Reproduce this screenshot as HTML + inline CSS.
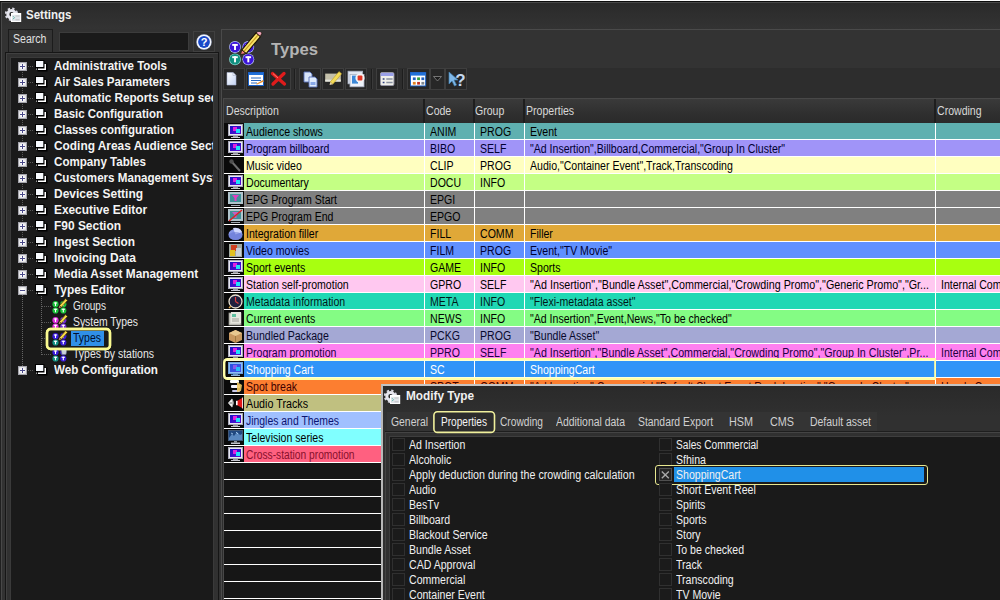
<!DOCTYPE html>
<html><head><meta charset="utf-8"><title>Settings</title>
<style>
html,body{margin:0;padding:0;background:#2c2c2c}
body{width:1000px;height:600px;overflow:hidden;position:relative;font-family:'Liberation Sans', sans-serif}
div,span{position:absolute;box-sizing:border-box}
span{white-space:pre;transform-origin:0 50%;display:block}
</style></head><body>

<svg width="0" height="0" style="position:absolute">
<defs>
<linearGradient id="scr" x1="0" y1="0" x2="1" y2="1"><stop offset="0" stop-color="#1a10c8"/><stop offset="1" stop-color="#5a10d0"/></linearGradient>
<g id="mon">
 <rect x="0" y="0" width="15" height="12" fill="#e8e8f0"/>
 <rect x="0.5" y="0.5" width="14" height="11" fill="none" stroke="#a8a8b8"/>
 <rect x="2" y="2" width="11" height="8" fill="url(#scr)"/>
 <rect x="5" y="3" width="4" height="4" fill="#e020e0"/>
 <rect x="8" y="5" width="4" height="4" fill="#20e0f8"/>
 <rect x="5" y="12" width="5" height="1" fill="#909098"/>
 <rect x="3" y="13" width="9" height="1" fill="#c8c8d0"/>
</g>
<g id="fold">
 <rect x="2.5" y="3.5" width="10" height="8" fill="#000"/>
 <rect x="3" y="4" width="8" height="6" fill="#fff"/>
 <rect x="0" y="0" width="9.5" height="8.5" fill="#000"/>
 <rect x="1" y="1" width="7.3" height="6" fill="#f8fbff"/>
 <rect x="1" y="8.6" width="1" height="1" fill="#ddd"/>
</g>
<g id="tt">
 <circle cx="3.5" cy="4" r="3.4" fill="#3010d8"/><rect x="1.8" y="2.3" width="3.6" height="1.2" fill="#fff"/><rect x="3" y="2.3" width="1.2" height="3.8" fill="#fff"/>
 <circle cx="3.5" cy="11.5" r="3.4" fill="#108878"/><rect x="1.8" y="9.8" width="3.6" height="1.2" fill="#fff"/><rect x="3" y="9.8" width="1.2" height="3.8" fill="#fff"/>
 <circle cx="11" cy="11.5" r="3.4" fill="#3010d8"/><rect x="9.3" y="9.8" width="3.6" height="1.2" fill="#fff"/><rect x="10.5" y="9.8" width="1.2" height="3.8" fill="#fff"/>
</g>
<g id="gear">
 <circle cx="6.5" cy="8.2" r="5.7" fill="none" stroke="#d8d8e2" stroke-width="2" stroke-dasharray="2.3 2.18"/>
 <circle cx="6.5" cy="8.2" r="3.7" fill="none" stroke="#e6e6ee" stroke-width="3"/>
 <rect x="6" y="7" width="10.2" height="9" fill="#fff"/>
 <rect x="7" y="8.8" width="8.2" height="6.2" fill="#e2e5ea"/>
 <path d="M8 10.2 l1.5 1.5 l-1.5 1.5" stroke="#50b0a0" fill="none" stroke-width=".9"/>
 <path d="M10.5 13.8h4M10.5 10h4" stroke="#b8b8b8" stroke-width=".8"/>
</g>
</defs></svg>

<div style="left:0px;top:0px;width:1000px;height:600px;background:#323232"></div><div style="left:2px;top:2px;width:998px;height:27px;background:linear-gradient(#2a2a2a,#333)"></div><div style="left:1px;top:2px;width:999px;height:1px;background:#484848"></div><div style="left:0px;top:0px;width:1000px;height:1px;background:#fafafa"></div><div style="left:0px;top:1px;width:1000px;height:1px;background:#0c0c0c"></div><div style="left:0px;top:2px;width:1px;height:598px;background:#202020"></div><div style="left:1px;top:2px;width:1px;height:598px;background:#484848"></div><svg style="position:absolute;left:5px;top:6px" width="17" height="17"><use href="#gear"/></svg><span style="left:26px;top:7px;height:16px;line-height:16px;font-size:12px;font-weight:700;color:#f0f0f0;transform:scaleX(0.960);">Settings</span><div style="left:8px;top:29px;width:45px;height:23px;background:#333;border:1px solid #1c1c1c;border-bottom:none;box-sizing:border-box"></div><span style="left:13px;top:31px;height:16px;line-height:16px;font-size:12px;font-weight:400;color:#e0e0e0;transform:scaleX(0.880);">Search</span><div style="left:59px;top:32px;width:130px;height:19px;background:#1a1a1a;border:1px solid #3c3c3c;box-sizing:border-box"></div><div style="left:193px;top:31px;width:22px;height:21px;background:#303030;border:1px solid #404040;box-sizing:border-box"></div><svg style="position:absolute;left:196px;top:34px" width="16" height="16"><circle cx="8" cy="8" r="7.7" fill="#c8d4f0"/><circle cx="8" cy="8" r="7" fill="#fff"/><circle cx="8" cy="8" r="5.9" fill="#1848c8"/><text x="8" y="12" font-family="Liberation Sans" font-weight="700" font-size="11" fill="#fff" text-anchor="middle">?</text></svg><div style="left:5px;top:52px;width:214px;height:548px;background:#313131;border:1px solid #161616;border-bottom:none;box-sizing:border-box;box-shadow:inset 1px 1px 0 #404040"></div><div style="left:10px;top:57px;width:204px;height:543px;background:#1a1a1a;border:1px solid #3a3a3a;border-bottom:none;box-sizing:border-box"></div><div style="left:11px;top:58px;width:202px;height:542px;overflow:hidden"><div style="left:-11px;top:-58px;width:1000px;height:600px"><div style="left:18px;top:62px;width:9px;height:9px;background:radial-gradient(#fff 30%,#d0d0d4);border:1px solid #a4a4ac;box-sizing:border-box"></div><div style="left:20px;top:66px;width:5px;height:1px;background:#484888"></div><div style="left:22px;top:64px;width:1px;height:5px;background:#484888"></div><div style="left:28px;top:66px;width:5px;height:1px;background:repeating-linear-gradient(90deg,#5a5a5a 0 1px,transparent 1px 2px)"></div><svg style="position:absolute;left:35px;top:60px" width="13" height="12"><use href="#fold"/></svg><span style="left:54px;top:58px;height:16px;line-height:16px;font-size:12px;font-weight:700;color:#f4f4f4;transform:scaleX(0.959);">Administrative Tools</span><div style="left:18px;top:78px;width:9px;height:9px;background:radial-gradient(#fff 30%,#d0d0d4);border:1px solid #a4a4ac;box-sizing:border-box"></div><div style="left:20px;top:82px;width:5px;height:1px;background:#484888"></div><div style="left:22px;top:80px;width:1px;height:5px;background:#484888"></div><div style="left:28px;top:82px;width:5px;height:1px;background:repeating-linear-gradient(90deg,#5a5a5a 0 1px,transparent 1px 2px)"></div><svg style="position:absolute;left:35px;top:76px" width="13" height="12"><use href="#fold"/></svg><span style="left:54px;top:74px;height:16px;line-height:16px;font-size:12px;font-weight:700;color:#f4f4f4;transform:scaleX(0.966);">Air Sales Parameters</span><div style="left:22px;top:72px;width:1px;height:5px;background:repeating-linear-gradient(180deg,#5a5a5a 0 1px,transparent 1px 2px)"></div><div style="left:18px;top:94px;width:9px;height:9px;background:radial-gradient(#fff 30%,#d0d0d4);border:1px solid #a4a4ac;box-sizing:border-box"></div><div style="left:20px;top:98px;width:5px;height:1px;background:#484888"></div><div style="left:22px;top:96px;width:1px;height:5px;background:#484888"></div><div style="left:28px;top:98px;width:5px;height:1px;background:repeating-linear-gradient(90deg,#5a5a5a 0 1px,transparent 1px 2px)"></div><svg style="position:absolute;left:35px;top:92px" width="13" height="12"><use href="#fold"/></svg><span style="left:54px;top:90px;height:16px;line-height:16px;font-size:12px;font-weight:700;color:#f4f4f4;transform:scaleX(0.975);">Automatic Reports Setup section</span><div style="left:22px;top:88px;width:1px;height:5px;background:repeating-linear-gradient(180deg,#5a5a5a 0 1px,transparent 1px 2px)"></div><div style="left:18px;top:110px;width:9px;height:9px;background:radial-gradient(#fff 30%,#d0d0d4);border:1px solid #a4a4ac;box-sizing:border-box"></div><div style="left:20px;top:114px;width:5px;height:1px;background:#484888"></div><div style="left:22px;top:112px;width:1px;height:5px;background:#484888"></div><div style="left:28px;top:114px;width:5px;height:1px;background:repeating-linear-gradient(90deg,#5a5a5a 0 1px,transparent 1px 2px)"></div><svg style="position:absolute;left:35px;top:108px" width="13" height="12"><use href="#fold"/></svg><span style="left:54px;top:106px;height:16px;line-height:16px;font-size:12px;font-weight:700;color:#f4f4f4;transform:scaleX(0.956);">Basic Configuration</span><div style="left:22px;top:104px;width:1px;height:5px;background:repeating-linear-gradient(180deg,#5a5a5a 0 1px,transparent 1px 2px)"></div><div style="left:18px;top:126px;width:9px;height:9px;background:radial-gradient(#fff 30%,#d0d0d4);border:1px solid #a4a4ac;box-sizing:border-box"></div><div style="left:20px;top:130px;width:5px;height:1px;background:#484888"></div><div style="left:22px;top:128px;width:1px;height:5px;background:#484888"></div><div style="left:28px;top:130px;width:5px;height:1px;background:repeating-linear-gradient(90deg,#5a5a5a 0 1px,transparent 1px 2px)"></div><svg style="position:absolute;left:35px;top:124px" width="13" height="12"><use href="#fold"/></svg><span style="left:54px;top:122px;height:16px;line-height:16px;font-size:12px;font-weight:700;color:#f4f4f4;transform:scaleX(0.957);">Classes configuration</span><div style="left:22px;top:120px;width:1px;height:5px;background:repeating-linear-gradient(180deg,#5a5a5a 0 1px,transparent 1px 2px)"></div><div style="left:18px;top:142px;width:9px;height:9px;background:radial-gradient(#fff 30%,#d0d0d4);border:1px solid #a4a4ac;box-sizing:border-box"></div><div style="left:20px;top:146px;width:5px;height:1px;background:#484888"></div><div style="left:22px;top:144px;width:1px;height:5px;background:#484888"></div><div style="left:28px;top:146px;width:5px;height:1px;background:repeating-linear-gradient(90deg,#5a5a5a 0 1px,transparent 1px 2px)"></div><svg style="position:absolute;left:35px;top:140px" width="13" height="12"><use href="#fold"/></svg><span style="left:54px;top:138px;height:16px;line-height:16px;font-size:12px;font-weight:700;color:#f4f4f4;transform:scaleX(0.990);">Coding Areas Audience Section</span><div style="left:22px;top:136px;width:1px;height:5px;background:repeating-linear-gradient(180deg,#5a5a5a 0 1px,transparent 1px 2px)"></div><div style="left:18px;top:158px;width:9px;height:9px;background:radial-gradient(#fff 30%,#d0d0d4);border:1px solid #a4a4ac;box-sizing:border-box"></div><div style="left:20px;top:162px;width:5px;height:1px;background:#484888"></div><div style="left:22px;top:160px;width:1px;height:5px;background:#484888"></div><div style="left:28px;top:162px;width:5px;height:1px;background:repeating-linear-gradient(90deg,#5a5a5a 0 1px,transparent 1px 2px)"></div><svg style="position:absolute;left:35px;top:156px" width="13" height="12"><use href="#fold"/></svg><span style="left:54px;top:154px;height:16px;line-height:16px;font-size:12px;font-weight:700;color:#f4f4f4;transform:scaleX(0.967);">Company Tables</span><div style="left:22px;top:152px;width:1px;height:5px;background:repeating-linear-gradient(180deg,#5a5a5a 0 1px,transparent 1px 2px)"></div><div style="left:18px;top:174px;width:9px;height:9px;background:radial-gradient(#fff 30%,#d0d0d4);border:1px solid #a4a4ac;box-sizing:border-box"></div><div style="left:20px;top:178px;width:5px;height:1px;background:#484888"></div><div style="left:22px;top:176px;width:1px;height:5px;background:#484888"></div><div style="left:28px;top:178px;width:5px;height:1px;background:repeating-linear-gradient(90deg,#5a5a5a 0 1px,transparent 1px 2px)"></div><svg style="position:absolute;left:35px;top:172px" width="13" height="12"><use href="#fold"/></svg><span style="left:54px;top:170px;height:16px;line-height:16px;font-size:12px;font-weight:700;color:#f4f4f4;transform:scaleX(0.966);">Customers Management System</span><div style="left:22px;top:168px;width:1px;height:5px;background:repeating-linear-gradient(180deg,#5a5a5a 0 1px,transparent 1px 2px)"></div><div style="left:18px;top:190px;width:9px;height:9px;background:radial-gradient(#fff 30%,#d0d0d4);border:1px solid #a4a4ac;box-sizing:border-box"></div><div style="left:20px;top:194px;width:5px;height:1px;background:#484888"></div><div style="left:22px;top:192px;width:1px;height:5px;background:#484888"></div><div style="left:28px;top:194px;width:5px;height:1px;background:repeating-linear-gradient(90deg,#5a5a5a 0 1px,transparent 1px 2px)"></div><svg style="position:absolute;left:35px;top:188px" width="13" height="12"><use href="#fold"/></svg><span style="left:54px;top:186px;height:16px;line-height:16px;font-size:12px;font-weight:700;color:#f4f4f4;transform:scaleX(0.996);">Devices Setting</span><div style="left:22px;top:184px;width:1px;height:5px;background:repeating-linear-gradient(180deg,#5a5a5a 0 1px,transparent 1px 2px)"></div><div style="left:18px;top:206px;width:9px;height:9px;background:radial-gradient(#fff 30%,#d0d0d4);border:1px solid #a4a4ac;box-sizing:border-box"></div><div style="left:20px;top:210px;width:5px;height:1px;background:#484888"></div><div style="left:22px;top:208px;width:1px;height:5px;background:#484888"></div><div style="left:28px;top:210px;width:5px;height:1px;background:repeating-linear-gradient(90deg,#5a5a5a 0 1px,transparent 1px 2px)"></div><svg style="position:absolute;left:35px;top:204px" width="13" height="12"><use href="#fold"/></svg><span style="left:54px;top:202px;height:16px;line-height:16px;font-size:12px;font-weight:700;color:#f4f4f4;transform:scaleX(0.989);">Executive Editor</span><div style="left:22px;top:200px;width:1px;height:5px;background:repeating-linear-gradient(180deg,#5a5a5a 0 1px,transparent 1px 2px)"></div><div style="left:18px;top:222px;width:9px;height:9px;background:radial-gradient(#fff 30%,#d0d0d4);border:1px solid #a4a4ac;box-sizing:border-box"></div><div style="left:20px;top:226px;width:5px;height:1px;background:#484888"></div><div style="left:22px;top:224px;width:1px;height:5px;background:#484888"></div><div style="left:28px;top:226px;width:5px;height:1px;background:repeating-linear-gradient(90deg,#5a5a5a 0 1px,transparent 1px 2px)"></div><svg style="position:absolute;left:35px;top:220px" width="13" height="12"><use href="#fold"/></svg><span style="left:54px;top:218px;height:16px;line-height:16px;font-size:12px;font-weight:700;color:#f4f4f4;transform:scaleX(0.995);">F90 Section</span><div style="left:22px;top:216px;width:1px;height:5px;background:repeating-linear-gradient(180deg,#5a5a5a 0 1px,transparent 1px 2px)"></div><div style="left:18px;top:238px;width:9px;height:9px;background:radial-gradient(#fff 30%,#d0d0d4);border:1px solid #a4a4ac;box-sizing:border-box"></div><div style="left:20px;top:242px;width:5px;height:1px;background:#484888"></div><div style="left:22px;top:240px;width:1px;height:5px;background:#484888"></div><div style="left:28px;top:242px;width:5px;height:1px;background:repeating-linear-gradient(90deg,#5a5a5a 0 1px,transparent 1px 2px)"></div><svg style="position:absolute;left:35px;top:236px" width="13" height="12"><use href="#fold"/></svg><span style="left:54px;top:234px;height:16px;line-height:16px;font-size:12px;font-weight:700;color:#f4f4f4;transform:scaleX(0.988);">Ingest Section</span><div style="left:22px;top:232px;width:1px;height:5px;background:repeating-linear-gradient(180deg,#5a5a5a 0 1px,transparent 1px 2px)"></div><div style="left:18px;top:254px;width:9px;height:9px;background:radial-gradient(#fff 30%,#d0d0d4);border:1px solid #a4a4ac;box-sizing:border-box"></div><div style="left:20px;top:258px;width:5px;height:1px;background:#484888"></div><div style="left:22px;top:256px;width:1px;height:5px;background:#484888"></div><div style="left:28px;top:258px;width:5px;height:1px;background:repeating-linear-gradient(90deg,#5a5a5a 0 1px,transparent 1px 2px)"></div><svg style="position:absolute;left:35px;top:252px" width="13" height="12"><use href="#fold"/></svg><span style="left:54px;top:250px;height:16px;line-height:16px;font-size:12px;font-weight:700;color:#f4f4f4;transform:scaleX(1.000);">Invoicing Data</span><div style="left:22px;top:248px;width:1px;height:5px;background:repeating-linear-gradient(180deg,#5a5a5a 0 1px,transparent 1px 2px)"></div><div style="left:18px;top:270px;width:9px;height:9px;background:radial-gradient(#fff 30%,#d0d0d4);border:1px solid #a4a4ac;box-sizing:border-box"></div><div style="left:20px;top:274px;width:5px;height:1px;background:#484888"></div><div style="left:22px;top:272px;width:1px;height:5px;background:#484888"></div><div style="left:28px;top:274px;width:5px;height:1px;background:repeating-linear-gradient(90deg,#5a5a5a 0 1px,transparent 1px 2px)"></div><svg style="position:absolute;left:35px;top:268px" width="13" height="12"><use href="#fold"/></svg><span style="left:54px;top:266px;height:16px;line-height:16px;font-size:12px;font-weight:700;color:#f4f4f4;transform:scaleX(0.985);">Media Asset Management</span><div style="left:22px;top:264px;width:1px;height:5px;background:repeating-linear-gradient(180deg,#5a5a5a 0 1px,transparent 1px 2px)"></div><div style="left:18px;top:286px;width:9px;height:9px;background:radial-gradient(#fff 30%,#d0d0d4);border:1px solid #a4a4ac;box-sizing:border-box"></div><div style="left:20px;top:290px;width:5px;height:1px;background:#484888"></div><div style="left:28px;top:290px;width:5px;height:1px;background:repeating-linear-gradient(90deg,#5a5a5a 0 1px,transparent 1px 2px)"></div><svg style="position:absolute;left:35px;top:284px" width="13" height="12"><use href="#fold"/></svg><span style="left:54px;top:282px;height:16px;line-height:16px;font-size:12px;font-weight:700;color:#f4f4f4;transform:scaleX(0.989);">Types Editor</span><div style="left:22px;top:280px;width:1px;height:5px;background:repeating-linear-gradient(180deg,#5a5a5a 0 1px,transparent 1px 2px)"></div><div style="left:18px;top:366px;width:9px;height:9px;background:radial-gradient(#fff 30%,#d0d0d4);border:1px solid #a4a4ac;box-sizing:border-box"></div><div style="left:20px;top:370px;width:5px;height:1px;background:#484888"></div><div style="left:22px;top:368px;width:1px;height:5px;background:#484888"></div><div style="left:28px;top:370px;width:5px;height:1px;background:repeating-linear-gradient(90deg,#5a5a5a 0 1px,transparent 1px 2px)"></div><svg style="position:absolute;left:35px;top:364px" width="13" height="12"><use href="#fold"/></svg><span style="left:54px;top:362px;height:16px;line-height:16px;font-size:12px;font-weight:700;color:#f4f4f4;transform:scaleX(0.971);">Web Configuration</span><div style="left:22px;top:295px;width:1px;height:71px;background:repeating-linear-gradient(0deg,#666 0 1px,transparent 1px 2px)"></div><div style="left:41px;top:296px;width:1px;height:59px;background:repeating-linear-gradient(0deg,#666 0 1px,transparent 1px 2px)"></div><div style="left:42px;top:306px;width:9px;height:1px;background:repeating-linear-gradient(90deg,#5a5a5a 0 1px,transparent 1px 2px)"></div><svg style="position:absolute;left:52px;top:298px" width="16" height="16"><circle cx="3.5" cy="6.2" r="3.1" fill="#18c038"/><rect x="1.87" y="4.42" width="3.26" height="1.12" fill="#fff"/><rect x="2.94" y="4.42" width="1.12" height="3.56" fill="#fff"/><circle cx="11.3" cy="6.2" r="3.1" fill="#18c038"/><rect x="9.67" y="4.42" width="3.26" height="1.12" fill="#fff"/><rect x="10.74" y="4.42" width="1.12" height="3.56" fill="#fff"/><circle cx="3.5" cy="12.5" r="3.1" fill="#18c038"/><rect x="1.87" y="10.72" width="3.26" height="1.12" fill="#fff"/><rect x="2.94" y="10.72" width="1.12" height="3.56" fill="#fff"/><circle cx="11.3" cy="12.5" r="3.1" fill="#18c038"/><rect x="9.67" y="10.72" width="3.26" height="1.12" fill="#fff"/><rect x="10.74" y="10.72" width="1.12" height="3.56" fill="#fff"/><path d="M7.4 7.6 L13.6 0.6 L15.6 2.4 L9.4 9.4 Z" fill="#f4d848" stroke="#302000" stroke-width=".7"/><path d="M7.4 7.6 L6.6 10.2 L9.4 9.4Z" fill="#f0b0a0" stroke="#302000" stroke-width=".4"/></svg><span style="left:73px;top:298px;height:16px;line-height:16px;font-size:12px;font-weight:400;color:#e8e8e8;transform:scaleX(0.838);">Groups</span><div style="left:42px;top:322px;width:9px;height:1px;background:repeating-linear-gradient(90deg,#5a5a5a 0 1px,transparent 1px 2px)"></div><svg style="position:absolute;left:52px;top:314px" width="16" height="16"><circle cx="3.5" cy="6.2" r="3.1" fill="#d828d8"/><rect x="1.87" y="4.42" width="3.26" height="1.12" fill="#fff"/><rect x="2.94" y="4.42" width="1.12" height="3.56" fill="#fff"/><circle cx="11.3" cy="6.2" r="3.1" fill="#7028d0"/><rect x="9.67" y="4.42" width="3.26" height="1.12" fill="#fff"/><rect x="10.74" y="4.42" width="1.12" height="3.56" fill="#fff"/><circle cx="3.5" cy="12.5" r="3.1" fill="#d828d8"/><rect x="1.87" y="10.72" width="3.26" height="1.12" fill="#fff"/><rect x="2.94" y="10.72" width="1.12" height="3.56" fill="#fff"/><circle cx="11.3" cy="12.5" r="3.1" fill="#7028d0"/><rect x="9.67" y="10.72" width="3.26" height="1.12" fill="#fff"/><rect x="10.74" y="10.72" width="1.12" height="3.56" fill="#fff"/><path d="M7.4 7.6 L13.6 0.6 L15.6 2.4 L9.4 9.4 Z" fill="#f4d848" stroke="#302000" stroke-width=".7"/><path d="M7.4 7.6 L6.6 10.2 L9.4 9.4Z" fill="#f0b0a0" stroke="#302000" stroke-width=".4"/></svg><span style="left:73px;top:314px;height:16px;line-height:16px;font-size:12px;font-weight:400;color:#e8e8e8;transform:scaleX(0.865);">System Types</span><svg style="position:absolute;left:44px;top:326px" width="70" height="26"><rect x="3" y="3" width="63" height="20" rx="3.5" fill="#1a1a1a" stroke="#fafa90" stroke-width="2.4"/></svg><div style="left:42px;top:338px;width:3px;height:1px;background:repeating-linear-gradient(90deg,#5a5a5a 0 1px,transparent 1px 2px)"></div><svg style="position:absolute;left:52px;top:330px" width="16" height="16"><circle cx="3.5" cy="6.2" r="3.1" fill="#3818d8"/><rect x="1.87" y="4.42" width="3.26" height="1.12" fill="#fff"/><rect x="2.94" y="4.42" width="1.12" height="3.56" fill="#fff"/><circle cx="11.3" cy="6.2" r="3.1" fill="#3818d8"/><rect x="9.67" y="4.42" width="3.26" height="1.12" fill="#fff"/><rect x="10.74" y="4.42" width="1.12" height="3.56" fill="#fff"/><circle cx="3.5" cy="12.5" r="3.1" fill="#109080"/><rect x="1.87" y="10.72" width="3.26" height="1.12" fill="#fff"/><rect x="2.94" y="10.72" width="1.12" height="3.56" fill="#fff"/><circle cx="11.3" cy="12.5" r="3.1" fill="#3818d8"/><rect x="9.67" y="10.72" width="3.26" height="1.12" fill="#fff"/><rect x="10.74" y="10.72" width="1.12" height="3.56" fill="#fff"/><path d="M7.4 7.6 L13.6 0.6 L15.6 2.4 L9.4 9.4 Z" fill="#f4d848" stroke="#302000" stroke-width=".7"/><path d="M7.4 7.6 L6.6 10.2 L9.4 9.4Z" fill="#f0b0a0" stroke="#302000" stroke-width=".4"/></svg><div style="left:71px;top:331px;width:33px;height:15px;background:#3090e8"></div><span style="left:73px;top:330px;height:16px;line-height:16px;font-size:12px;font-weight:400;color:#001030;transform:scaleX(0.875);">Types</span><div style="left:42px;top:354px;width:9px;height:1px;background:repeating-linear-gradient(90deg,#5a5a5a 0 1px,transparent 1px 2px)"></div><svg style="position:absolute;left:52px;top:346px" width="16" height="16"><circle cx="3.5" cy="6.2" r="3.1" fill="#3818d8"/><rect x="1.87" y="4.42" width="3.26" height="1.12" fill="#fff"/><rect x="2.94" y="4.42" width="1.12" height="3.56" fill="#fff"/><circle cx="11.3" cy="6.2" r="3.1" fill="#3818d8"/><rect x="9.67" y="4.42" width="3.26" height="1.12" fill="#fff"/><rect x="10.74" y="4.42" width="1.12" height="3.56" fill="#fff"/><circle cx="3.5" cy="12.5" r="3.1" fill="#109080"/><rect x="1.87" y="10.72" width="3.26" height="1.12" fill="#fff"/><rect x="2.94" y="10.72" width="1.12" height="3.56" fill="#fff"/><circle cx="11.3" cy="12.5" r="3.1" fill="#3818d8"/><rect x="9.67" y="10.72" width="3.26" height="1.12" fill="#fff"/><rect x="10.74" y="10.72" width="1.12" height="3.56" fill="#fff"/><path d="M9 3h6l-1 5.5h-4z" fill="#c8d0d8" stroke="#687078" stroke-width=".6"/><ellipse cx="12" cy="3.3" rx="3" ry="1" fill="#f0f4f8"/></svg><span style="left:73px;top:346px;height:16px;line-height:16px;font-size:12px;font-weight:400;color:#e8e8e8;transform:scaleX(0.874);">Types by stations</span><svg style="position:absolute;left:44px;top:326px" width="70" height="26"><rect x="3" y="3" width="63" height="20" rx="3.5" fill="none" stroke="#fafa90" stroke-width="2.4"/></svg></div></div><div style="left:221px;top:29px;width:780px;height:572px;border:1px solid #4a4a4a;border-right:none;border-bottom:none;box-sizing:border-box;background:#2d2d2d"></div><div style="left:222px;top:30px;width:778px;height:38px;background:#333"></div><svg style="position:absolute;left:226px;top:32px" width="38" height="34"><circle cx="9" cy="15" r="5.8999999999999995" fill="#b8c8ff"/><circle cx="9" cy="15" r="5.3" fill="#3c14d8"/><rect x="6.22" y="11.95" width="5.57" height="1.91" fill="#fff"/><rect x="8.05" y="11.95" width="1.91" height="6.09" fill="#fff"/><circle cx="22.3" cy="15" r="5.8999999999999995" fill="#b8c8ff"/><circle cx="22.3" cy="15" r="5.3" fill="#3c14d8"/><rect x="19.52" y="11.95" width="5.57" height="1.91" fill="#fff"/><rect x="21.35" y="11.95" width="1.91" height="6.09" fill="#fff"/><circle cx="9" cy="27.3" r="5.8999999999999995" fill="#90d8d0"/><circle cx="9" cy="27.3" r="5.3" fill="#109080"/><rect x="6.22" y="24.25" width="5.57" height="1.91" fill="#fff"/><rect x="8.05" y="24.25" width="1.91" height="6.09" fill="#fff"/><circle cx="22.3" cy="27.3" r="5.8999999999999995" fill="#b8c8ff"/><circle cx="22.3" cy="27.3" r="5.3" fill="#3c14d8"/><rect x="19.52" y="24.25" width="5.57" height="1.91" fill="#fff"/><rect x="21.35" y="24.25" width="1.91" height="6.09" fill="#fff"/><g transform="translate(-1.2,-2)"><path d="M17 20 L31.3 2.8 L35.7 6.6 L21.4 23.6 Z" fill="#f8e468" stroke="#181000" stroke-width="1.1"/><path d="M19 21.7 L33.5 4.7" stroke="#c89820" stroke-width="1.2"/><path d="M31.5 3 l1.6-1.8 q2.6-.6 4 2 l-1.6 3.2z" fill="#f4a8c0" stroke="#181000" stroke-width=".8"/><path d="M17 20 L15.8 24.6 L21 23.4Z" fill="#f08080" stroke="#181000" stroke-width=".7"/></g></svg><span style="left:271px;top:42px;height:16px;line-height:16px;font-size:16px;font-weight:700;color:#b4b4b4;transform:scaleX(1.043);">Types</span><div style="left:223px;top:68px;width:22px;height:22px;border:1px solid #3e3e3e;box-sizing:border-box;background:#272727"></div><div style="left:246px;top:68px;width:22px;height:22px;border:1px solid #3e3e3e;box-sizing:border-box;background:#272727"></div><div style="left:269px;top:68px;width:22px;height:22px;border:1px solid #3e3e3e;box-sizing:border-box;background:#272727"></div><div style="left:299px;top:68px;width:22px;height:22px;border:1px solid #3e3e3e;box-sizing:border-box;background:#272727"></div><div style="left:322px;top:68px;width:22px;height:22px;border:1px solid #3e3e3e;box-sizing:border-box;background:#272727"></div><div style="left:345px;top:68px;width:22px;height:22px;border:1px solid #3e3e3e;box-sizing:border-box;background:#272727"></div><div style="left:376px;top:68px;width:22px;height:22px;border:1px solid #3e3e3e;box-sizing:border-box;background:#272727"></div><div style="left:407px;top:68px;width:23px;height:22px;border:1px solid #3e3e3e;box-sizing:border-box;background:#272727"></div><div style="left:430px;top:68px;width:15px;height:22px;border:1px solid #3e3e3e;box-sizing:border-box;background:#272727"></div><div style="left:445px;top:68px;width:22px;height:22px;border:1px solid #3e3e3e;box-sizing:border-box;background:#272727"></div><div style="left:294px;top:69px;width:1px;height:20px;background:#1e1e1e"></div><div style="left:295px;top:69px;width:1px;height:20px;background:#3a3a3a"></div><div style="left:371px;top:69px;width:1px;height:20px;background:#1e1e1e"></div><div style="left:372px;top:69px;width:1px;height:20px;background:#3a3a3a"></div><div style="left:402px;top:69px;width:1px;height:20px;background:#1e1e1e"></div><div style="left:403px;top:69px;width:1px;height:20px;background:#3a3a3a"></div><svg style="position:absolute;left:226px;top:72px" width="12" height="14"><defs><linearGradient id="dg" x1="0" y1="0" x2="1" y2="1"><stop offset="0" stop-color="#fff"/><stop offset="1" stop-color="#c4d4f4"/></linearGradient></defs><path d="M1 .5h6l3 3v9.5H1z" fill="url(#dg)" stroke="#a8b4d0" stroke-width=".6"/><path d="M7 .5v3h3z" fill="#f8faff" stroke="#98a4c0" stroke-width=".5"/></svg><svg style="position:absolute;left:248px;top:71px" width="18" height="16"><rect x="0" y="1" width="16" height="14" fill="#fff"/><rect x="0" y="1" width="16" height="3" fill="#2070d8"/><rect x="0.5" y="1.5" width="15" height="13" fill="none" stroke="#1860c8"/><path d="M3 7h10M3 9.5h10M3 12h6" stroke="#2868c0" stroke-width="1"/><path d="M8 13l7-4 1 1.5-7 3z" fill="#e89030"/></svg><svg style="position:absolute;left:270px;top:71px" width="18" height="16"><path d="M2.5 2.5 L14.5 13 M14 2.5 L3 13" stroke="#e01c1c" stroke-width="3.3" stroke-linecap="round"/><path d="M3 2.6 L8 7" stroke="#ff8070" stroke-width="1"/></svg><svg style="position:absolute;left:303px;top:71px" width="16" height="17"><path d="M1 1h6l2 2v8H1z" fill="#d8e4f8" stroke="#5870b8" stroke-width=".9"/><path d="M6 6h6l2 2v8H6z" fill="#e0ecfc" stroke="#5870b8" stroke-width=".9"/><rect x="7.5" y="11" width="5" height="3" fill="#88a8e8"/></svg><svg style="position:absolute;left:324px;top:70px" width="20" height="16"><rect x="1.2" y="3.6" width="15.6" height="8" fill="#c4c0aa"/><rect x="1.2" y="9.6" width="15.6" height="2" fill="#e4e4dc"/><path d="M6.2 12 L15 1.6 L17.6 3.8 L8.8 14.2 Z" fill="#f4dc58" stroke="#b89828" stroke-width=".6"/><path d="M6.2 12 L5.6 15 L8.8 14.2Z" fill="#ecd8a8"/></svg><svg style="position:absolute;left:347px;top:70px" width="19" height="18"><rect x="1" y="1.2" width="14.6" height="12.6" fill="#dfe6f2" stroke="#a8b0c0" stroke-width=".8"/><rect x="3" y="4.4" width="14" height="12.4" fill="#eef2fa" stroke="#a8b0c0" stroke-width=".8"/><rect x="5" y="5.6" width="6" height="8" fill="#3c88d8"/><circle cx="13" cy="8" r="4.6" fill="#f4f4f4"/><rect x="10.6" y="5.6" width="4.8" height="4.8" rx="1" fill="#e03424"/></svg><svg style="position:absolute;left:380px;top:71px" width="17" height="16"><g transform="scale(.9,1)"><rect x=".5" y="1.5" width="15" height="13" rx="1.5" fill="#f0f0ea" stroke="#9898a8"/><rect x="1" y="2" width="14" height="3" fill="#9aa0e8"/><path d="M3 8h2M3 11.5h2" stroke="#304080" stroke-width="1.6"/><path d="M7 8h7M7 11.5h7" stroke="#8890a0" stroke-width="1.6"/></g></svg><svg style="position:absolute;left:410px;top:72px" width="17" height="16"><g transform="scale(.95,.9)"><rect x=".5" y=".5" width="16" height="15" fill="#fff" stroke="#1860c8"/><rect x="1" y="1" width="15" height="3" fill="#2070d8"/><rect x="3" y="6" width="3" height="3" fill="#2060c0"/><rect x="7.5" y="6" width="3" height="3" fill="#30a040"/><rect x="12" y="6" width="3" height="3" fill="#2060c0"/><rect x="3" y="11" width="3" height="3" fill="#e08020"/><rect x="7.5" y="11" width="3" height="3" fill="#c03020"/><rect x="12" y="11" width="3" height="3" fill="#808890"/></g></svg><svg style="position:absolute;left:433px;top:76px" width="9" height="6"><path d="M0.5 0.5h8l-4 4.5z" fill="#1c1c1c" stroke="#8a8a8a" stroke-width=".8"/></svg><svg style="position:absolute;left:448px;top:71px" width="18" height="17"><path d="M1 1v12l3-3 2.5 5 2-1-2.5-5h4z" fill="#80b8e8" stroke="#4080b0" stroke-width=".7"/><text x="12.5" y="14.5" font-family="Liberation Sans" font-weight="700" font-size="17" fill="#c4d8f0" text-anchor="middle">?</text></svg><div style="left:223px;top:98px;width:778px;height:503px;border:1px solid #484848;border-right:none;border-bottom:none;box-sizing:border-box;background:#2a2a2a"></div><div style="left:224px;top:99px;width:777px;height:501px;background:#161616"></div><div style="left:224px;top:123px;width:20px;height:340px;background:#0a0a0a"></div><div style="left:224px;top:99px;width:777px;height:24px;background:linear-gradient(#3a3a3a,#303030 55%,#2a2a2a)"></div><div style="left:423px;top:99px;width:2px;height:24px;background:#1e1e1e"></div><div style="left:473px;top:99px;width:2px;height:24px;background:#1e1e1e"></div><div style="left:523px;top:99px;width:2px;height:24px;background:#1e1e1e"></div><div style="left:934px;top:99px;width:2px;height:24px;background:#1e1e1e"></div><span style="left:226px;top:103px;height:16px;line-height:16px;font-size:12px;font-weight:400;color:#d8d8d8;transform:scaleX(0.880);">Description</span><span style="left:426px;top:103px;height:16px;line-height:16px;font-size:12px;font-weight:400;color:#d8d8d8;transform:scaleX(0.880);">Code</span><span style="left:475px;top:103px;height:16px;line-height:16px;font-size:12px;font-weight:400;color:#d8d8d8;transform:scaleX(0.880);">Group</span><span style="left:526px;top:103px;height:16px;line-height:16px;font-size:12px;font-weight:400;color:#d8d8d8;transform:scaleX(0.880);">Properties</span><span style="left:937px;top:103px;height:16px;line-height:16px;font-size:12px;font-weight:400;color:#d8d8d8;transform:scaleX(0.880);">Crowding</span><div style="left:244px;top:123px;width:756px;height:16px;background:#5fb0b0"></div><div style="left:224px;top:139px;width:776px;height:1px;background:#fff"></div><div style="left:424px;top:123px;width:1px;height:17px;background:#fff"></div><div style="left:474px;top:123px;width:1px;height:17px;background:#fff"></div><div style="left:524px;top:123px;width:1px;height:17px;background:#fff"></div><div style="left:935px;top:123px;width:1px;height:17px;background:#fff"></div><svg style="position:absolute;left:228px;top:124px" width="15" height="14"><use href="#mon"/></svg><span style="left:246px;top:124px;height:16px;line-height:16px;font-size:12px;font-weight:400;color:#000;transform:scaleX(0.880);">Audience shows</span><span style="left:430px;top:124px;height:16px;line-height:16px;font-size:12px;font-weight:400;color:#000;transform:scaleX(0.880);">ANIM</span><span style="left:480px;top:124px;height:16px;line-height:16px;font-size:12px;font-weight:400;color:#000;transform:scaleX(0.880);">PROG</span><span style="left:530px;top:124px;height:16px;line-height:16px;font-size:12px;font-weight:400;color:#000;transform:scaleX(0.880);">Event</span><div style="left:244px;top:140px;width:756px;height:16px;background:#a094f8"></div><div style="left:224px;top:156px;width:776px;height:1px;background:#fff"></div><div style="left:424px;top:140px;width:1px;height:17px;background:#fff"></div><div style="left:474px;top:140px;width:1px;height:17px;background:#fff"></div><div style="left:524px;top:140px;width:1px;height:17px;background:#fff"></div><div style="left:935px;top:140px;width:1px;height:17px;background:#fff"></div><svg style="position:absolute;left:228px;top:141px" width="15" height="14"><use href="#mon"/></svg><span style="left:246px;top:141px;height:16px;line-height:16px;font-size:12px;font-weight:400;color:#000030;transform:scaleX(0.880);">Program billboard</span><span style="left:430px;top:141px;height:16px;line-height:16px;font-size:12px;font-weight:400;color:#000030;transform:scaleX(0.880);">BIBO</span><span style="left:480px;top:141px;height:16px;line-height:16px;font-size:12px;font-weight:400;color:#000030;transform:scaleX(0.880);">SELF</span><span style="left:530px;top:141px;height:16px;line-height:16px;font-size:12px;font-weight:400;color:#000030;transform:scaleX(0.880);">&quot;Ad Insertion&quot;,Billboard,Commercial,&quot;Group In Cluster&quot;</span><div style="left:244px;top:157px;width:756px;height:16px;background:#ffffc0"></div><div style="left:224px;top:173px;width:776px;height:1px;background:#fff"></div><div style="left:424px;top:157px;width:1px;height:17px;background:#fff"></div><div style="left:474px;top:157px;width:1px;height:17px;background:#fff"></div><div style="left:524px;top:157px;width:1px;height:17px;background:#fff"></div><div style="left:935px;top:157px;width:1px;height:17px;background:#fff"></div><svg style="position:absolute;left:228px;top:158px" width="15" height="15"><path d="M3 3 L12 13" stroke="#707070" stroke-width="2"/><circle cx="3.5" cy="3.5" r="2.2" fill="#505050"/></svg><span style="left:246px;top:158px;height:16px;line-height:16px;font-size:12px;font-weight:400;color:#000;transform:scaleX(0.880);">Music video</span><span style="left:430px;top:158px;height:16px;line-height:16px;font-size:12px;font-weight:400;color:#000;transform:scaleX(0.880);">CLIP</span><span style="left:480px;top:158px;height:16px;line-height:16px;font-size:12px;font-weight:400;color:#000;transform:scaleX(0.880);">PROG</span><span style="left:530px;top:158px;height:16px;line-height:16px;font-size:12px;font-weight:400;color:#000;transform:scaleX(0.880);">Audio,&quot;Container Event&quot;,Track,Transcoding</span><div style="left:244px;top:174px;width:756px;height:16px;background:#c4ff84"></div><div style="left:224px;top:190px;width:776px;height:1px;background:#fff"></div><div style="left:424px;top:174px;width:1px;height:17px;background:#fff"></div><div style="left:474px;top:174px;width:1px;height:17px;background:#fff"></div><div style="left:524px;top:174px;width:1px;height:17px;background:#fff"></div><div style="left:935px;top:174px;width:1px;height:17px;background:#fff"></div><svg style="position:absolute;left:228px;top:175px" width="15" height="14"><use href="#mon"/></svg><span style="left:246px;top:175px;height:16px;line-height:16px;font-size:12px;font-weight:400;color:#000;transform:scaleX(0.880);">Documentary</span><span style="left:430px;top:175px;height:16px;line-height:16px;font-size:12px;font-weight:400;color:#000;transform:scaleX(0.880);">DOCU</span><span style="left:480px;top:175px;height:16px;line-height:16px;font-size:12px;font-weight:400;color:#000;transform:scaleX(0.880);">INFO</span><div style="left:244px;top:191px;width:756px;height:16px;background:#808080"></div><div style="left:224px;top:207px;width:776px;height:1px;background:#fff"></div><div style="left:424px;top:191px;width:1px;height:17px;background:#fff"></div><div style="left:474px;top:191px;width:1px;height:17px;background:#fff"></div><div style="left:524px;top:191px;width:1px;height:17px;background:#fff"></div><div style="left:935px;top:191px;width:1px;height:17px;background:#fff"></div><svg style="position:absolute;left:228px;top:192px" width="15" height="15"><rect x="0" y="0" width="15" height="12" fill="#b0c4cc"/><rect x="2" y="2" width="11" height="8" fill="#409098"/><path d="M4 3h7l-2.5 3v3h-2v-3z" fill="#e040c0"/><rect x="3" y="13" width="9" height="1" fill="#a0a8b0"/></svg><span style="left:246px;top:192px;height:16px;line-height:16px;font-size:12px;font-weight:400;color:#000;transform:scaleX(0.880);">EPG Program Start</span><span style="left:430px;top:192px;height:16px;line-height:16px;font-size:12px;font-weight:400;color:#000;transform:scaleX(0.880);">EPGI</span><div style="left:244px;top:208px;width:756px;height:16px;background:#808080"></div><div style="left:224px;top:224px;width:776px;height:1px;background:#fff"></div><div style="left:424px;top:208px;width:1px;height:17px;background:#fff"></div><div style="left:474px;top:208px;width:1px;height:17px;background:#fff"></div><div style="left:524px;top:208px;width:1px;height:17px;background:#fff"></div><div style="left:935px;top:208px;width:1px;height:17px;background:#fff"></div><svg style="position:absolute;left:228px;top:209px" width="15" height="15"><rect x="0" y="0" width="15" height="12" fill="#b0c4cc"/><rect x="2" y="2" width="11" height="8" fill="#409098"/><path d="M4 3h7l-2.5 3v3h-2v-3z" fill="#c060c0"/><path d="M1 12 L14 1" stroke="#e02020" stroke-width="1.4"/><rect x="3" y="13" width="9" height="1" fill="#a0a8b0"/></svg><span style="left:246px;top:209px;height:16px;line-height:16px;font-size:12px;font-weight:400;color:#000;transform:scaleX(0.880);">EPG Program End</span><span style="left:430px;top:209px;height:16px;line-height:16px;font-size:12px;font-weight:400;color:#000;transform:scaleX(0.880);">EPGO</span><div style="left:244px;top:225px;width:756px;height:16px;background:#e0a838"></div><div style="left:224px;top:241px;width:776px;height:1px;background:#fff"></div><div style="left:424px;top:225px;width:1px;height:17px;background:#fff"></div><div style="left:474px;top:225px;width:1px;height:17px;background:#fff"></div><div style="left:524px;top:225px;width:1px;height:17px;background:#fff"></div><div style="left:935px;top:225px;width:1px;height:17px;background:#fff"></div><svg style="position:absolute;left:228px;top:226px" width="15" height="15"><ellipse cx="7.5" cy="8.5" rx="7" ry="5.5" fill="#8898e8"/><path d="M7.5 8.5 L5 2 A7 6 0 0 1 14 6z" fill="#d0d8ff"/><ellipse cx="7.5" cy="10" rx="7" ry="4" fill="#6070d0" opacity=".5"/></svg><span style="left:246px;top:226px;height:16px;line-height:16px;font-size:12px;font-weight:400;color:#000;transform:scaleX(0.880);">Integration filler</span><span style="left:430px;top:226px;height:16px;line-height:16px;font-size:12px;font-weight:400;color:#000;transform:scaleX(0.880);">FILL</span><span style="left:480px;top:226px;height:16px;line-height:16px;font-size:12px;font-weight:400;color:#000;transform:scaleX(0.880);">COMM</span><span style="left:530px;top:226px;height:16px;line-height:16px;font-size:12px;font-weight:400;color:#000;transform:scaleX(0.880);">Filler</span><div style="left:244px;top:242px;width:756px;height:16px;background:#6090ff"></div><div style="left:224px;top:258px;width:776px;height:1px;background:#fff"></div><div style="left:424px;top:242px;width:1px;height:17px;background:#fff"></div><div style="left:474px;top:242px;width:1px;height:17px;background:#fff"></div><div style="left:524px;top:242px;width:1px;height:17px;background:#fff"></div><div style="left:935px;top:242px;width:1px;height:17px;background:#fff"></div><svg style="position:absolute;left:228px;top:243px" width="15" height="15"><rect x="1" y="1" width="13" height="13" fill="#a0a8a0"/><rect x="3" y="2" width="6" height="6" fill="#d04020"/><rect x="2" y="7" width="5" height="6" fill="#e0c020"/><rect x="8" y="5" width="5" height="8" fill="#c8d0d8"/></svg><span style="left:246px;top:243px;height:16px;line-height:16px;font-size:12px;font-weight:400;color:#000030;transform:scaleX(0.880);">Video movies</span><span style="left:430px;top:243px;height:16px;line-height:16px;font-size:12px;font-weight:400;color:#000030;transform:scaleX(0.880);">FILM</span><span style="left:480px;top:243px;height:16px;line-height:16px;font-size:12px;font-weight:400;color:#000030;transform:scaleX(0.880);">PROG</span><span style="left:530px;top:243px;height:16px;line-height:16px;font-size:12px;font-weight:400;color:#000030;transform:scaleX(0.880);">Event,&quot;TV Movie&quot;</span><div style="left:244px;top:259px;width:756px;height:16px;background:#a8ff10"></div><div style="left:224px;top:275px;width:776px;height:1px;background:#fff"></div><div style="left:424px;top:259px;width:1px;height:17px;background:#fff"></div><div style="left:474px;top:259px;width:1px;height:17px;background:#fff"></div><div style="left:524px;top:259px;width:1px;height:17px;background:#fff"></div><div style="left:935px;top:259px;width:1px;height:17px;background:#fff"></div><svg style="position:absolute;left:228px;top:260px" width="15" height="14"><use href="#mon"/></svg><span style="left:246px;top:260px;height:16px;line-height:16px;font-size:12px;font-weight:400;color:#000;transform:scaleX(0.880);">Sport events</span><span style="left:430px;top:260px;height:16px;line-height:16px;font-size:12px;font-weight:400;color:#000;transform:scaleX(0.880);">GAME</span><span style="left:480px;top:260px;height:16px;line-height:16px;font-size:12px;font-weight:400;color:#000;transform:scaleX(0.880);">INFO</span><span style="left:530px;top:260px;height:16px;line-height:16px;font-size:12px;font-weight:400;color:#000;transform:scaleX(0.880);">Sports</span><div style="left:244px;top:276px;width:756px;height:16px;background:#ffc8f0"></div><div style="left:224px;top:292px;width:776px;height:1px;background:#fff"></div><div style="left:424px;top:276px;width:1px;height:17px;background:#fff"></div><div style="left:474px;top:276px;width:1px;height:17px;background:#fff"></div><div style="left:524px;top:276px;width:1px;height:17px;background:#fff"></div><div style="left:935px;top:276px;width:1px;height:17px;background:#fff"></div><svg style="position:absolute;left:228px;top:277px" width="15" height="14"><use href="#mon"/></svg><span style="left:246px;top:277px;height:16px;line-height:16px;font-size:12px;font-weight:400;color:#000;transform:scaleX(0.880);">Station self-promotion</span><span style="left:430px;top:277px;height:16px;line-height:16px;font-size:12px;font-weight:400;color:#000;transform:scaleX(0.880);">GPRO</span><span style="left:480px;top:277px;height:16px;line-height:16px;font-size:12px;font-weight:400;color:#000;transform:scaleX(0.880);">SELF</span><span style="left:530px;top:277px;height:16px;line-height:16px;font-size:12px;font-weight:400;color:#000;transform:scaleX(0.895);">&quot;Ad Insertion&quot;,&quot;Bundle Asset&quot;,Commercial,&quot;Crowding Promo&quot;,&quot;Generic Promo&quot;,&quot;Gr...</span><span style="left:941px;top:277px;height:16px;line-height:16px;font-size:12px;font-weight:400;color:#000;transform:scaleX(0.880);">Internal Com</span><div style="left:244px;top:293px;width:756px;height:16px;background:#20d8b4"></div><div style="left:224px;top:309px;width:776px;height:1px;background:#fff"></div><div style="left:424px;top:293px;width:1px;height:17px;background:#fff"></div><div style="left:474px;top:293px;width:1px;height:17px;background:#fff"></div><div style="left:524px;top:293px;width:1px;height:17px;background:#fff"></div><div style="left:935px;top:293px;width:1px;height:17px;background:#fff"></div><svg style="position:absolute;left:228px;top:294px" width="15" height="15"><circle cx="7.5" cy="7.5" r="6.5" fill="#202040" stroke="#e8e0d0" stroke-width="1.3"/><path d="M7.5 7.5V3M7.5 7.5l3 2" stroke="#e04040" stroke-width="1.2"/><path d="M3 12l-2 2" stroke="#e0a040" stroke-width="1.5"/></svg><span style="left:246px;top:294px;height:16px;line-height:16px;font-size:12px;font-weight:400;color:#001818;transform:scaleX(0.880);">Metadata information</span><span style="left:430px;top:294px;height:16px;line-height:16px;font-size:12px;font-weight:400;color:#001818;transform:scaleX(0.880);">META</span><span style="left:480px;top:294px;height:16px;line-height:16px;font-size:12px;font-weight:400;color:#001818;transform:scaleX(0.880);">INFO</span><span style="left:530px;top:294px;height:16px;line-height:16px;font-size:12px;font-weight:400;color:#001818;transform:scaleX(0.880);">&quot;Flexi-metadata asset&quot;</span><div style="left:244px;top:310px;width:756px;height:16px;background:#84fc84"></div><div style="left:224px;top:326px;width:776px;height:1px;background:#fff"></div><div style="left:424px;top:310px;width:1px;height:17px;background:#fff"></div><div style="left:474px;top:310px;width:1px;height:17px;background:#fff"></div><div style="left:524px;top:310px;width:1px;height:17px;background:#fff"></div><div style="left:935px;top:310px;width:1px;height:17px;background:#fff"></div><svg style="position:absolute;left:228px;top:311px" width="15" height="15"><rect x="1" y="2" width="12" height="12" fill="#d8d8d0" stroke="#909088" stroke-width=".8"/><rect x="3" y="1" width="10" height="11" fill="#e8e8e0"/><rect x="4" y="3" width="4" height="3" fill="#60c0a0"/><path d="M4 8h7M4 10h7" stroke="#a0a098" stroke-width="1"/></svg><span style="left:246px;top:311px;height:16px;line-height:16px;font-size:12px;font-weight:400;color:#000;transform:scaleX(0.880);">Current events</span><span style="left:430px;top:311px;height:16px;line-height:16px;font-size:12px;font-weight:400;color:#000;transform:scaleX(0.880);">NEWS</span><span style="left:480px;top:311px;height:16px;line-height:16px;font-size:12px;font-weight:400;color:#000;transform:scaleX(0.880);">INFO</span><span style="left:530px;top:311px;height:16px;line-height:16px;font-size:12px;font-weight:400;color:#000;transform:scaleX(0.880);">&quot;Ad Insertion&quot;,Event,News,&quot;To be checked&quot;</span><div style="left:244px;top:327px;width:756px;height:16px;background:#a4a8d4"></div><div style="left:224px;top:343px;width:776px;height:1px;background:#fff"></div><div style="left:424px;top:327px;width:1px;height:17px;background:#fff"></div><div style="left:474px;top:327px;width:1px;height:17px;background:#fff"></div><div style="left:524px;top:327px;width:1px;height:17px;background:#fff"></div><div style="left:935px;top:327px;width:1px;height:17px;background:#fff"></div><svg style="position:absolute;left:228px;top:328px" width="15" height="15"><path d="M1 5l6.5-3 6.5 3v7l-6.5 3-6.5-3z" fill="#c89860"/><path d="M1 5l6.5 3 6.5-3-6.5-3z" fill="#e8c890"/><path d="M7.5 8v7" stroke="#a07840" stroke-width="1"/></svg><span style="left:246px;top:328px;height:16px;line-height:16px;font-size:12px;font-weight:400;color:#08082c;transform:scaleX(0.880);">Bundled Package</span><span style="left:430px;top:328px;height:16px;line-height:16px;font-size:12px;font-weight:400;color:#08082c;transform:scaleX(0.880);">PCKG</span><span style="left:480px;top:328px;height:16px;line-height:16px;font-size:12px;font-weight:400;color:#08082c;transform:scaleX(0.880);">PROG</span><span style="left:530px;top:328px;height:16px;line-height:16px;font-size:12px;font-weight:400;color:#08082c;transform:scaleX(0.880);">&quot;Bundle Asset&quot;</span><div style="left:244px;top:344px;width:756px;height:16px;background:#ff80f0"></div><div style="left:224px;top:360px;width:776px;height:1px;background:#fff"></div><div style="left:424px;top:344px;width:1px;height:17px;background:#fff"></div><div style="left:474px;top:344px;width:1px;height:17px;background:#fff"></div><div style="left:524px;top:344px;width:1px;height:17px;background:#fff"></div><div style="left:935px;top:344px;width:1px;height:17px;background:#fff"></div><svg style="position:absolute;left:228px;top:345px" width="15" height="14"><use href="#mon"/></svg><span style="left:246px;top:345px;height:16px;line-height:16px;font-size:12px;font-weight:400;color:#200040;transform:scaleX(0.880);">Program promotion</span><span style="left:430px;top:345px;height:16px;line-height:16px;font-size:12px;font-weight:400;color:#200040;transform:scaleX(0.880);">PPRO</span><span style="left:480px;top:345px;height:16px;line-height:16px;font-size:12px;font-weight:400;color:#200040;transform:scaleX(0.880);">SELF</span><span style="left:530px;top:345px;height:16px;line-height:16px;font-size:12px;font-weight:400;color:#200040;transform:scaleX(0.890);">&quot;Ad Insertion&quot;,&quot;Bundle Asset&quot;,Commercial,&quot;Crowding Promo&quot;,&quot;Group In Cluster&quot;,Pr...</span><span style="left:941px;top:345px;height:16px;line-height:16px;font-size:12px;font-weight:400;color:#200040;transform:scaleX(0.880);">Internal Com</span><div style="left:244px;top:361px;width:756px;height:16px;background:#3094f8"></div><div style="left:224px;top:377px;width:776px;height:1px;background:#fff"></div><div style="left:424px;top:361px;width:1px;height:17px;background:#fff"></div><div style="left:474px;top:361px;width:1px;height:17px;background:#fff"></div><div style="left:524px;top:361px;width:1px;height:17px;background:#fff"></div><div style="left:935px;top:361px;width:1px;height:17px;background:#fff"></div><svg style="position:absolute;left:228px;top:362px" width="15" height="14"><use href="#mon"/><rect x="0" y="0" width="15" height="12" fill="#3094f8" opacity=".5"/><rect x="3" y="12" width="9" height="2" fill="#3094f8" opacity=".4"/></svg><span style="left:246px;top:362px;height:16px;line-height:16px;font-size:12px;font-weight:400;color:#fff;transform:scaleX(0.880);">Shopping Cart</span><span style="left:430px;top:362px;height:16px;line-height:16px;font-size:12px;font-weight:400;color:#fff;transform:scaleX(0.880);">SC</span><span style="left:530px;top:362px;height:16px;line-height:16px;font-size:12px;font-weight:400;color:#fff;transform:scaleX(0.880);">ShoppingCart</span><div style="left:244px;top:378px;width:756px;height:16px;background:#fc7e30"></div><div style="left:224px;top:394px;width:776px;height:1px;background:#fff"></div><div style="left:424px;top:378px;width:1px;height:17px;background:#fff"></div><div style="left:474px;top:378px;width:1px;height:17px;background:#fff"></div><div style="left:524px;top:378px;width:1px;height:17px;background:#fff"></div><div style="left:935px;top:378px;width:1px;height:17px;background:#fff"></div><svg style="position:absolute;left:228px;top:379px" width="15" height="15"><rect x="2" y="1" width="9" height="3" rx="1" fill="#fff"/><rect x="3" y="6" width="9" height="3" rx="1" fill="#f4f4ff"/><rect x="4" y="11" width="8" height="2" rx="1" fill="#c8c8e8"/><path d="M9 3l5 3-1 6-4 1z" fill="#f0c860" opacity=".9"/></svg><span style="left:246px;top:379px;height:16px;line-height:16px;font-size:12px;font-weight:400;color:#400000;transform:scaleX(0.880);">Spot break</span><span style="left:430px;top:379px;height:16px;line-height:16px;font-size:12px;font-weight:400;color:#400000;transform:scaleX(0.880);">SPOT</span><span style="left:480px;top:379px;height:16px;line-height:16px;font-size:12px;font-weight:400;color:#400000;transform:scaleX(0.880);">COMM</span><span style="left:530px;top:379px;height:16px;line-height:16px;font-size:12px;font-weight:400;color:#400000;transform:scaleX(0.880);">&quot;Ad Insertion&quot;,Commercial,&quot;Default Short Event Reel duration&quot;,&quot;Group In Cluster&quot;,...</span><span style="left:941px;top:379px;height:16px;line-height:16px;font-size:12px;font-weight:400;color:#400000;transform:scaleX(0.880);">Hourly Com</span><div style="left:244px;top:395px;width:756px;height:16px;background:#c0c080"></div><div style="left:224px;top:411px;width:776px;height:1px;background:#fff"></div><div style="left:424px;top:395px;width:1px;height:17px;background:#fff"></div><div style="left:474px;top:395px;width:1px;height:17px;background:#fff"></div><div style="left:524px;top:395px;width:1px;height:17px;background:#fff"></div><div style="left:935px;top:395px;width:1px;height:17px;background:#fff"></div><svg style="position:absolute;left:228px;top:396px" width="15" height="15"><path d="M0 7 L4 2.6 Q7 7 4 11.4Z" fill="#f4f4f4"/><path d="M1.5 7h3" stroke="#404040" stroke-width=".8"/><path d="M4 3.2 Q6.4 7 4 10.8" stroke="#a0a0a0" fill="none" stroke-width=".9"/><path d="M8.4 5.2 L15 1.6 V12.4 L8.4 8.8Z" fill="#e01818"/><rect x="8" y="4.8" width="1.6" height="4.4" fill="#fff"/><rect x="14" y="1.6" width="1.2" height="10.8" fill="#f0d8d8"/></svg><span style="left:246px;top:396px;height:16px;line-height:16px;font-size:12px;font-weight:400;color:#000;transform:scaleX(0.894);">Audio Tracks</span><span style="left:430px;top:396px;height:16px;line-height:16px;font-size:12px;font-weight:400;color:#000;transform:scaleX(0.880);">AUDT</span><div style="left:244px;top:412px;width:756px;height:16px;background:#a0c0ff"></div><div style="left:224px;top:428px;width:776px;height:1px;background:#fff"></div><div style="left:424px;top:412px;width:1px;height:17px;background:#fff"></div><div style="left:474px;top:412px;width:1px;height:17px;background:#fff"></div><div style="left:524px;top:412px;width:1px;height:17px;background:#fff"></div><div style="left:935px;top:412px;width:1px;height:17px;background:#fff"></div><svg style="position:absolute;left:228px;top:413px" width="15" height="14"><use href="#mon"/></svg><span style="left:246px;top:413px;height:16px;line-height:16px;font-size:12px;font-weight:400;color:#0c1470;transform:scaleX(0.868);">Jingles and Themes</span><span style="left:430px;top:413px;height:16px;line-height:16px;font-size:12px;font-weight:400;color:#0c1470;transform:scaleX(0.880);">JING</span><div style="left:244px;top:429px;width:756px;height:16px;background:#80ffff"></div><div style="left:224px;top:445px;width:776px;height:1px;background:#fff"></div><div style="left:424px;top:429px;width:1px;height:17px;background:#fff"></div><div style="left:474px;top:429px;width:1px;height:17px;background:#fff"></div><div style="left:524px;top:429px;width:1px;height:17px;background:#fff"></div><div style="left:935px;top:429px;width:1px;height:17px;background:#fff"></div><svg style="position:absolute;left:228px;top:430px" width="15" height="15"><rect x="0" y="0" width="15" height="11" fill="#405878"/><rect x="1" y="1" width="13" height="9" fill="#204880"/><path d="M1 8l3-4 2 2 3-4 3 3 2-1v6H1z" fill="#6898d0" opacity=".8"/><path d="M3 3l2 1M8 2l2 2" stroke="#b8d8f8" stroke-width=".8"/><rect x="6" y="11" width="3" height="1.5" fill="#9098a0"/><rect x="3" y="12.5" width="9" height="1.5" fill="#c0c4cc"/></svg><span style="left:246px;top:430px;height:16px;line-height:16px;font-size:12px;font-weight:400;color:#000;transform:scaleX(0.880);">Television series</span><span style="left:430px;top:430px;height:16px;line-height:16px;font-size:12px;font-weight:400;color:#000;transform:scaleX(0.880);">SERI</span><div style="left:244px;top:446px;width:756px;height:16px;background:#ff6080"></div><div style="left:224px;top:462px;width:776px;height:1px;background:#fff"></div><div style="left:424px;top:446px;width:1px;height:17px;background:#fff"></div><div style="left:474px;top:446px;width:1px;height:17px;background:#fff"></div><div style="left:524px;top:446px;width:1px;height:17px;background:#fff"></div><div style="left:935px;top:446px;width:1px;height:17px;background:#fff"></div><svg style="position:absolute;left:228px;top:447px" width="15" height="14"><use href="#mon"/></svg><span style="left:246px;top:447px;height:16px;line-height:16px;font-size:12px;font-weight:400;color:#88102c;transform:scaleX(0.852);">Cross-station promotion</span><span style="left:430px;top:447px;height:16px;line-height:16px;font-size:12px;font-weight:400;color:#88102c;transform:scaleX(0.880);">XPRO</span><div style="left:224px;top:479px;width:776px;height:1px;background:#fff"></div><div style="left:224px;top:496px;width:776px;height:1px;background:#fff"></div><div style="left:224px;top:513px;width:776px;height:1px;background:#fff"></div><div style="left:224px;top:530px;width:776px;height:1px;background:#fff"></div><div style="left:224px;top:547px;width:776px;height:1px;background:#fff"></div><div style="left:224px;top:564px;width:776px;height:1px;background:#fff"></div><div style="left:224px;top:581px;width:776px;height:1px;background:#fff"></div><div style="left:224px;top:598px;width:776px;height:1px;background:#fff"></div><div style="left:224px;top:615px;width:776px;height:1px;background:#fff"></div><svg style="position:absolute;left:221px;top:356px" width="718" height="26"><path d="M714.2 3.2 H6.7 Q3.2 3.2 3.2 6.7 V19.3 Q3.2 22.8 6.7 22.8 H714.2" fill="none" stroke="#ffffa8" stroke-width="2.4"/><rect x="713.2" y="2" width="1.8" height="22" fill="#ffffa8"/></svg><div style="left:381px;top:384px;width:622px;height:220px;background:linear-gradient(#2a2a2a,#303030 30px,#303030);border:2px solid #b8b8b8;border-top-color:#c4c4c4;box-sizing:border-box"></div><svg style="position:absolute;left:384px;top:388px" width="17" height="17"><use href="#gear"/></svg><span style="left:406px;top:388px;height:16px;line-height:16px;font-size:12px;font-weight:700;color:#f0f0f0;transform:scaleX(0.984);">Modify Type</span><div style="left:387px;top:412px;width:490px;height:19px;background:#343434"></div><span style="left:391px;top:414px;height:16px;line-height:16px;font-size:12px;font-weight:400;color:#d0d0d0;transform:scaleX(0.866);">General</span><span style="left:441px;top:414px;height:16px;line-height:16px;font-size:12px;font-weight:400;color:#f4f4f4;transform:scaleX(0.841);">Properties</span><span style="left:500px;top:414px;height:16px;line-height:16px;font-size:12px;font-weight:400;color:#d0d0d0;transform:scaleX(0.848);">Crowding</span><span style="left:556px;top:414px;height:16px;line-height:16px;font-size:12px;font-weight:400;color:#d0d0d0;transform:scaleX(0.869);">Additional data</span><span style="left:638px;top:414px;height:16px;line-height:16px;font-size:12px;font-weight:400;color:#d0d0d0;transform:scaleX(0.865);">Standard Export</span><span style="left:729px;top:414px;height:16px;line-height:16px;font-size:12px;font-weight:400;color:#d0d0d0;transform:scaleX(0.900);">HSM</span><span style="left:770px;top:414px;height:16px;line-height:16px;font-size:12px;font-weight:400;color:#d0d0d0;transform:scaleX(0.900);">CMS</span><span style="left:810px;top:414px;height:16px;line-height:16px;font-size:12px;font-weight:400;color:#d0d0d0;transform:scaleX(0.871);">Default asset</span><div style="left:385px;top:431px;width:616px;height:1px;background:#1e1e1e"></div><div style="left:385px;top:432px;width:616px;height:170px;background:#303030;border:1px solid #444;box-sizing:border-box"></div><div style="left:389px;top:436px;width:612px;height:166px;background:#1a1a1a;border:1px solid #3e3e3e;box-sizing:border-box"></div><svg style="position:absolute;left:432px;top:410px" width="65" height="25"><rect x="1.9" y="1.8" width="60.6" height="20.6" rx="3.5" fill="#2c2c2c" stroke="#f0f09c" stroke-width="1.6"/></svg><span style="left:441px;top:414px;height:16px;line-height:16px;font-size:12px;font-weight:400;color:#f4f4f4;transform:scaleX(0.841);">Properties</span><div style="left:392px;top:438px;width:13px;height:13px;border:1px solid #303030;box-sizing:border-box;background:#1b1b1b"></div><span style="left:409px;top:437px;height:16px;line-height:16px;font-size:12px;font-weight:400;color:#f0f0f0;transform:scaleX(0.880);">Ad Insertion</span><div style="left:392px;top:453px;width:13px;height:13px;border:1px solid #303030;box-sizing:border-box;background:#1b1b1b"></div><span style="left:409px;top:452px;height:16px;line-height:16px;font-size:12px;font-weight:400;color:#f0f0f0;transform:scaleX(0.880);">Alcoholic</span><div style="left:392px;top:468px;width:13px;height:13px;border:1px solid #303030;box-sizing:border-box;background:#1b1b1b"></div><span style="left:409px;top:467px;height:16px;line-height:16px;font-size:12px;font-weight:400;color:#f0f0f0;transform:scaleX(0.890);">Apply deduction during the crowding calculation</span><div style="left:392px;top:483px;width:13px;height:13px;border:1px solid #303030;box-sizing:border-box;background:#1b1b1b"></div><span style="left:409px;top:482px;height:16px;line-height:16px;font-size:12px;font-weight:400;color:#f0f0f0;transform:scaleX(0.880);">Audio</span><div style="left:392px;top:498px;width:13px;height:13px;border:1px solid #303030;box-sizing:border-box;background:#1b1b1b"></div><span style="left:409px;top:497px;height:16px;line-height:16px;font-size:12px;font-weight:400;color:#f0f0f0;transform:scaleX(0.880);">BesTv</span><div style="left:392px;top:513px;width:13px;height:13px;border:1px solid #303030;box-sizing:border-box;background:#1b1b1b"></div><span style="left:409px;top:512px;height:16px;line-height:16px;font-size:12px;font-weight:400;color:#f0f0f0;transform:scaleX(0.880);">Billboard</span><div style="left:392px;top:528px;width:13px;height:13px;border:1px solid #303030;box-sizing:border-box;background:#1b1b1b"></div><span style="left:409px;top:527px;height:16px;line-height:16px;font-size:12px;font-weight:400;color:#f0f0f0;transform:scaleX(0.880);">Blackout Service</span><div style="left:392px;top:543px;width:13px;height:13px;border:1px solid #303030;box-sizing:border-box;background:#1b1b1b"></div><span style="left:409px;top:542px;height:16px;line-height:16px;font-size:12px;font-weight:400;color:#f0f0f0;transform:scaleX(0.880);">Bundle Asset</span><div style="left:392px;top:558px;width:13px;height:13px;border:1px solid #303030;box-sizing:border-box;background:#1b1b1b"></div><span style="left:409px;top:557px;height:16px;line-height:16px;font-size:12px;font-weight:400;color:#f0f0f0;transform:scaleX(0.880);">CAD Approval</span><div style="left:392px;top:573px;width:13px;height:13px;border:1px solid #303030;box-sizing:border-box;background:#1b1b1b"></div><span style="left:409px;top:572px;height:16px;line-height:16px;font-size:12px;font-weight:400;color:#f0f0f0;transform:scaleX(0.880);">Commercial</span><div style="left:392px;top:588px;width:13px;height:13px;border:1px solid #303030;box-sizing:border-box;background:#1b1b1b"></div><span style="left:409px;top:587px;height:16px;line-height:16px;font-size:12px;font-weight:400;color:#f0f0f0;transform:scaleX(0.880);">Container Event</span><div style="left:659px;top:438px;width:13px;height:13px;border:1px solid #303030;box-sizing:border-box;background:#1b1b1b"></div><span style="left:676px;top:437px;height:16px;line-height:16px;font-size:12px;font-weight:400;color:#f0f0f0;transform:scaleX(0.846);">Sales Commercial</span><div style="left:659px;top:453px;width:13px;height:13px;border:1px solid #303030;box-sizing:border-box;background:#1b1b1b"></div><span style="left:676px;top:452px;height:16px;line-height:16px;font-size:12px;font-weight:400;color:#f0f0f0;transform:scaleX(0.880);">Sfhina</span><div style="left:674px;top:467px;width:250px;height:15px;background:#2090e8"></div><div style="left:655px;top:465px;width:273px;height:20px;border:1px solid #e8e890;border-radius:3px;box-sizing:border-box"></div><div style="left:659px;top:468px;width:13px;height:13px;border:1px solid #505050;box-sizing:border-box;background:#262626"></div><svg style="position:absolute;left:661px;top:471px" width="9" height="8"><path d="M0.8 0.5L7.8 7.2M7.8 0.5L0.8 7.2" stroke="#a8a8a8" stroke-width="1.4"/></svg><span style="left:676px;top:467px;height:16px;line-height:16px;font-size:12px;font-weight:400;color:#f0f0f0;transform:scaleX(0.880);">ShoppingCart</span><div style="left:659px;top:483px;width:13px;height:13px;border:1px solid #303030;box-sizing:border-box;background:#1b1b1b"></div><span style="left:676px;top:482px;height:16px;line-height:16px;font-size:12px;font-weight:400;color:#f0f0f0;transform:scaleX(0.880);">Short Event Reel</span><div style="left:659px;top:498px;width:13px;height:13px;border:1px solid #303030;box-sizing:border-box;background:#1b1b1b"></div><span style="left:676px;top:497px;height:16px;line-height:16px;font-size:12px;font-weight:400;color:#f0f0f0;transform:scaleX(0.880);">Spirits</span><div style="left:659px;top:513px;width:13px;height:13px;border:1px solid #303030;box-sizing:border-box;background:#1b1b1b"></div><span style="left:676px;top:512px;height:16px;line-height:16px;font-size:12px;font-weight:400;color:#f0f0f0;transform:scaleX(0.880);">Sports</span><div style="left:659px;top:528px;width:13px;height:13px;border:1px solid #303030;box-sizing:border-box;background:#1b1b1b"></div><span style="left:676px;top:527px;height:16px;line-height:16px;font-size:12px;font-weight:400;color:#f0f0f0;transform:scaleX(0.880);">Story</span><div style="left:659px;top:543px;width:13px;height:13px;border:1px solid #303030;box-sizing:border-box;background:#1b1b1b"></div><span style="left:676px;top:542px;height:16px;line-height:16px;font-size:12px;font-weight:400;color:#f0f0f0;transform:scaleX(0.880);">To be checked</span><div style="left:659px;top:558px;width:13px;height:13px;border:1px solid #303030;box-sizing:border-box;background:#1b1b1b"></div><span style="left:676px;top:557px;height:16px;line-height:16px;font-size:12px;font-weight:400;color:#f0f0f0;transform:scaleX(0.880);">Track</span><div style="left:659px;top:573px;width:13px;height:13px;border:1px solid #303030;box-sizing:border-box;background:#1b1b1b"></div><span style="left:676px;top:572px;height:16px;line-height:16px;font-size:12px;font-weight:400;color:#f0f0f0;transform:scaleX(0.880);">Transcoding</span><div style="left:659px;top:588px;width:13px;height:13px;border:1px solid #303030;box-sizing:border-box;background:#1b1b1b"></div><span style="left:676px;top:587px;height:16px;line-height:16px;font-size:12px;font-weight:400;color:#f0f0f0;transform:scaleX(0.880);">TV Movie</span>
</body></html>
